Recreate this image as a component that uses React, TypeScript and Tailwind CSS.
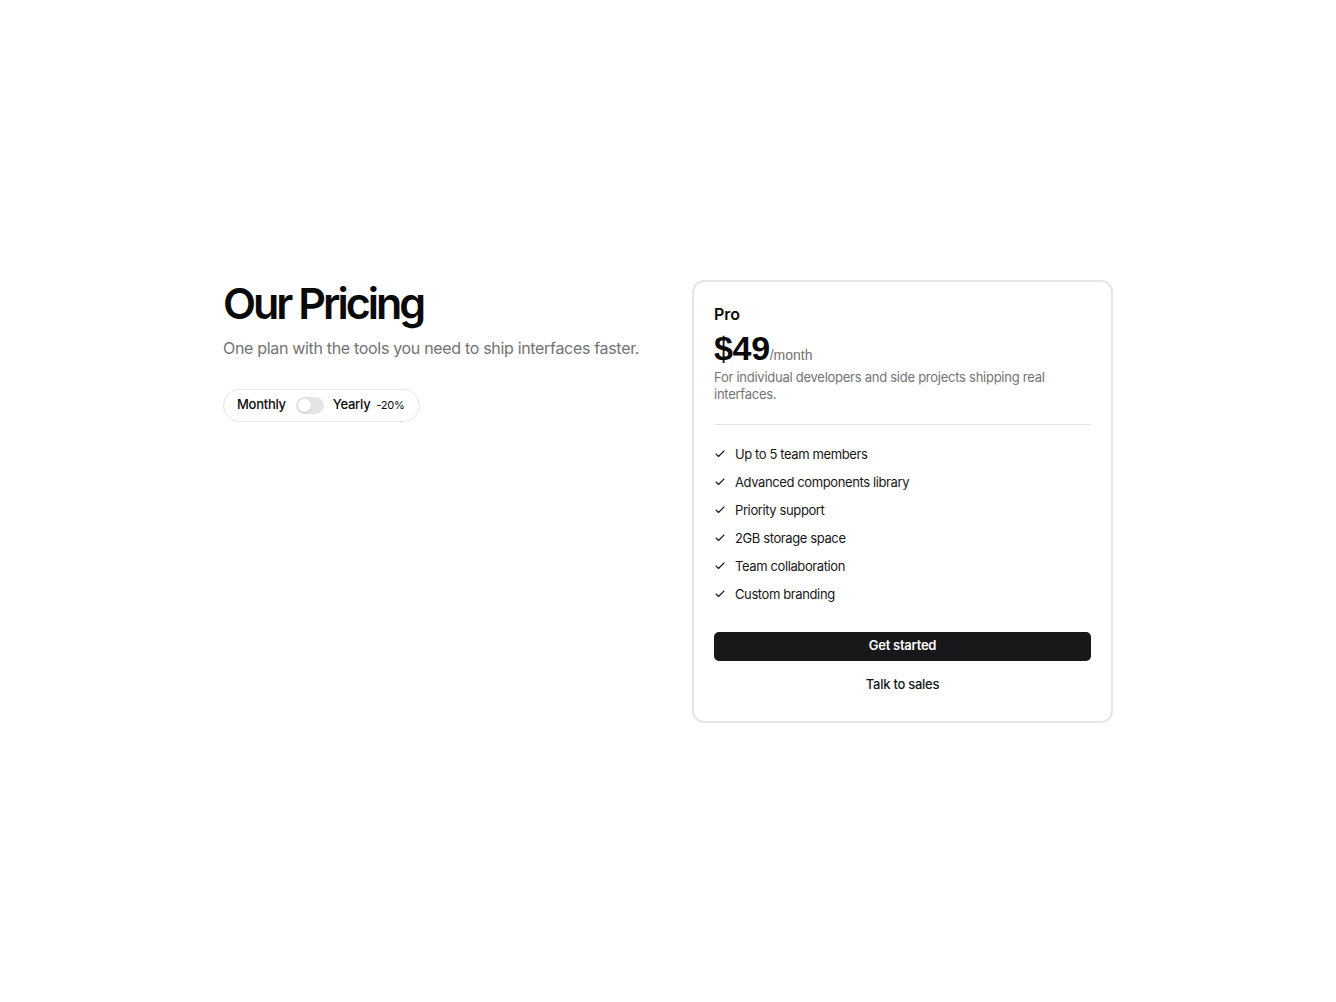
import React, { useState } from 'react';

const FEATURES = [
  'Up to 5 team members',
  'Advanced components library',
  'Priority support',
  '2GB storage space',
  'Team collaboration',
  'Custom branding',
];

const Check = () => (
  <svg width="12" height="12" viewBox="0 0 24 24" fill="none" stroke="currentColor" strokeWidth="2.2" strokeLinecap="round" strokeLinejoin="round" className="shrink-0 text-neutral-900">
    <path d="M20 6 9 17l-5-5" />
  </svg>
);

export default function App() {
  const [yearly, setYearly] = useState(false);

  return (
    <div className="min-h-screen flex items-center justify-center bg-white text-neutral-950" style={{ fontFamily: 'Inter, "Noto Sans", sans-serif' }}>
      <div className="w-[890px] grid grid-cols-2 gap-12 items-start">
        {/* Left: heading + billing toggle */}
        <div className="pt-px">
          <h1 className="text-[43px] leading-[44px] font-semibold tracking-[-0.07em] text-neutral-950">Our Pricing</h1>
          <p className="mt-[11px] text-base text-neutral-500 tracking-[-0.02em] whitespace-nowrap">One plan with the tools you need to ship interfaces faster.</p>
          <div className="mt-[29px] inline-flex items-center h-[33px] pl-[13px] pr-[14px] rounded-full border border-neutral-200 text-[13px] font-medium tracking-[-0.02em]">
            <span>Monthly</span>
            <button
              type="button"
              onClick={() => setYearly(!yearly)}
              className={`ml-[10px] w-[28px] h-[17px] rounded-full p-[2px] flex items-center ${yearly ? 'bg-neutral-900 justify-end' : 'bg-neutral-200 justify-start'}`}
            >
              <span className="w-[13px] h-[13px] rounded-full bg-white shadow-sm" />
            </button>
            <span className="ml-[9px]">Yearly</span>
            <span className="ml-[6px] text-[11px] font-normal">-20%</span>
          </div>
        </div>

        {/* Right: plan card */}
        <div className="border-2 border-neutral-200 rounded-xl px-5 pt-[20px] pb-[21px]">
          <div className="text-base leading-6 font-semibold">Pro</div>
          <div className="flex items-baseline mt-[2px]" style={{ fontFamily: '"Liberation Sans", Arial, sans-serif' }}>
            <span className="text-[34px] leading-[40px] font-bold tracking-[-0.01em]">$49</span>
            <span className="text-sm text-neutral-500">/month</span>
          </div>
          <p className="mt-[1px] text-[13px] leading-[17px] text-neutral-500 tracking-[-0.02em]">For individual developers and side projects shipping real interfaces.</p>
          <div className="mt-[21px] border-t border-neutral-200" />
          <ul className="mt-[20px] flex flex-col gap-[10px]">
            {FEATURES.map((f) => (
              <li key={f} className="flex items-center gap-[9px] text-[13px] leading-[18px] tracking-[-0.03em] text-neutral-900">
                <Check />
                {f}
              </li>
            ))}
          </ul>
          <button type="button" className="mt-[29px] w-full h-[29px] rounded-[5px] bg-[#18181b] text-white text-[13px] font-semibold tracking-[-0.02em]">
            Get started
          </button>
          <button type="button" className="mt-[10px] w-full h-[29px] text-[13px] font-medium tracking-[-0.02em] text-neutral-900">
            Talk to sales
          </button>
        </div>
      </div>
    </div>
  );
}
